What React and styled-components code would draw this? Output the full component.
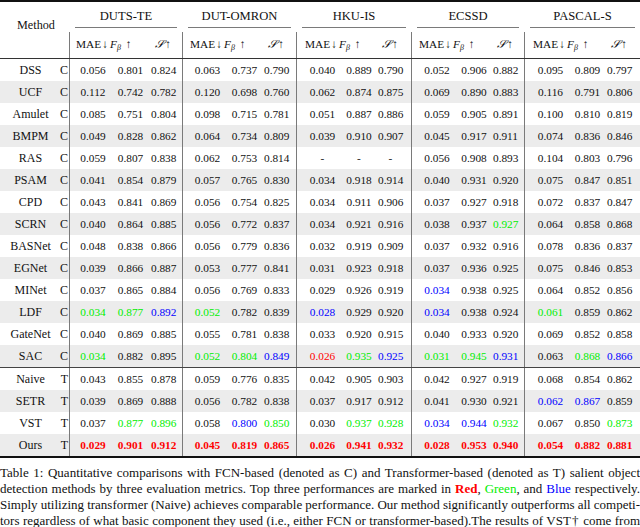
import React from 'react';
import styled, { createGlobalStyle } from 'styled-components';

const COLS = '61px 8px 113px 114px 115px 113px 116px';
const LINE = '#7a7a7a';

const Global = createGlobalStyle`
  html, body { margin: 0; padding: 0; background: #fff; }
  body { font-family: "Liberation Serif", "Times New Roman", serif; color: #111; }
`;

const Figure = styled.div`
  width: 640px;
  height: 527px;
  overflow: hidden;
`;

const Rule = styled.div`
  height: ${(p) => p.$h}px;
  background: ${(p) => p.$c};
`;

const Header = styled.div`
  display: grid;
  grid-template-columns: ${COLS};
  grid-template-rows: 26px 4px 26px;
  font-size: 12px;
`;

const MethodHead = styled.div`
  grid-row: 1 / span 3;
  grid-column: 1 / span 2;
  text-align: center;
  padding: 15px 0 0 3px;
  line-height: 16px;
  font-size: 12.2px;
`;

const GroupTitle = styled.div`
  grid-row: 1;
  margin: 0 5px 0 6px;
  border-bottom: 1px solid ${LINE};
  padding-top: 3px;
  line-height: 22px;
  text-align: center;
  font-size: 12.6px;
`;

const GroupGrid = styled.div`
  display: grid;
  grid-template-columns: ${(p) => p.$a}px ${(p) => p.$b}px 25px;
  align-items: center;
  padding-left: ${(p) => p.$p}px;
  border-left: 1px solid ${LINE};
  box-sizing: border-box;
`;

const SubHead = styled(GroupGrid)`
  grid-row: 3;
  padding-bottom: 2px;
  font-size: 11.3px;
`;

const MaeF = styled.span`
  grid-column: 1 / span 2;
  white-space: nowrap;
  display: flex;
  align-items: baseline;
`;

const Arrow = styled.span`
  display: inline-block;
  width: ${(p) => p.$w || 8}px;
  margin-left: ${(p) => p.$ml || 0}px;
  text-align: center;
  font-size: 11.5px;
`;

const MathF = styled.i`
  margin-left: 1px;
`;

const Sub = styled.span`
  font-size: 8px;
  font-style: italic;
  position: relative;
  top: 2px;
`;

const SHead = styled.span`
  text-align: center;
  white-space: nowrap;
`;

const CalS = styled.i`
  font-family: "DejaVu Serif", serif;
  font-size: 11.5px;
`;

const Row = styled.div`
  display: grid;
  grid-template-columns: ${COLS};
  height: 22px;
  align-items: stretch;
  background: ${(p) => (p.$shade ? '#ececec' : 'transparent')};
  font-size: 11.3px;
`;

const NameCell = styled.div`
  display: flex;
  align-items: center;
  justify-content: center;
  font-size: 12px;
`;

const TypeCell = styled.div`
  display: flex;
  align-items: center;
  justify-content: flex-end;
  padding-right: 1px;
  font-size: 12px;
`;

const Value = styled.span`
  text-align: center;
  color: ${(p) => p.$color};
  font-weight: ${(p) => (p.$bold ? 700 : 400)};
`;

const Caption = styled.div`
  margin-top: 7px;
  font-size: 13px;
  line-height: 16px;
  color: #111;
`;

const CapLine = styled.div`
  text-align: justify;
  text-align-last: justify;
  word-spacing: -1px;
  white-space: nowrap;
`;

const Tint = styled.span`
  color: ${(p) => p.$color};
  font-weight: ${(p) => (p.$bold ? 700 : 400)};
`;

const COLORS = { r: '#ff0000', g: '#00ee00', b: '#0000ff' };

const GROUPS = [
  { title: 'DUTS-TE', p: 6, a: 34, b: 41 },
  { title: 'DUT-OMRON', p: 7, a: 35, b: 39 },
  { title: 'HKU-IS', p: 8, a: 35, b: 38 },
  { title: 'ECSSD', p: 7, a: 36, b: 38 },
  { title: 'PASCAL-S', p: 8, a: 35, b: 39 },
];

const ROWS = [
  ['DSS', 'C', '0.056 0.801 0.824 0.063 0.737 0.790 0.040 0.889 0.790 0.052 0.906 0.882 0.095 0.809 0.797'],
  ['UCF', 'C', '0.112 0.742 0.782 0.120 0.698 0.760 0.062 0.874 0.875 0.069 0.890 0.883 0.116 0.791 0.806'],
  ['Amulet', 'C', '0.085 0.751 0.804 0.098 0.715 0.781 0.051 0.887 0.886 0.059 0.905 0.891 0.100 0.810 0.819'],
  ['BMPM', 'C', '0.049 0.828 0.862 0.064 0.734 0.809 0.039 0.910 0.907 0.045 0.917 0.911 0.074 0.836 0.846'],
  ['RAS', 'C', '0.059 0.807 0.838 0.062 0.753 0.814 - - - 0.056 0.908 0.893 0.104 0.803 0.796'],
  ['PSAM', 'C', '0.041 0.854 0.879 0.057 0.765 0.830 0.034 0.918 0.914 0.040 0.931 0.920 0.075 0.847 0.851'],
  ['CPD', 'C', '0.043 0.841 0.869 0.056 0.754 0.825 0.034 0.911 0.906 0.037 0.927 0.918 0.072 0.837 0.847'],
  ['SCRN', 'C', '0.040 0.864 0.885 0.056 0.772 0.837 0.034 0.921 0.916 0.038 0.937 0.927g 0.064 0.858 0.868'],
  ['BASNet', 'C', '0.048 0.838 0.866 0.056 0.779 0.836 0.032 0.919 0.909 0.037 0.932 0.916 0.078 0.836 0.837'],
  ['EGNet', 'C', '0.039 0.866 0.887 0.053 0.777 0.841 0.031 0.923 0.918 0.037 0.936 0.925 0.075 0.846 0.853'],
  ['MINet', 'C', '0.037 0.865 0.884 0.056 0.769 0.833 0.029 0.926 0.919 0.034b 0.938 0.925 0.064 0.852 0.856'],
  ['LDF', 'C', '0.034g 0.877g 0.892b 0.052g 0.782 0.839 0.028b 0.929 0.920 0.034b 0.938 0.924 0.061g 0.859 0.862'],
  ['GateNet', 'C', '0.040 0.869 0.885 0.055 0.781 0.838 0.033 0.920 0.915 0.040 0.933 0.920 0.069 0.852 0.858'],
  ['SAC', 'C', '0.034g 0.882 0.895 0.052g 0.804g 0.849b 0.026r 0.935g 0.925b 0.031g 0.945g 0.931b 0.063 0.868g 0.866b'],
  ['Naive', 'T', '0.043 0.855 0.878 0.059 0.776 0.835 0.042 0.905 0.903 0.042 0.927 0.919 0.068 0.854 0.862'],
  ['SETR', 'T', '0.039 0.869 0.888 0.056 0.782 0.838 0.037 0.917 0.912 0.041 0.930 0.921 0.062b 0.867b 0.859'],
  ['VST', 'T', '0.037 0.877g 0.896g 0.058 0.800b 0.850g 0.030 0.937g 0.928g 0.034b 0.944b 0.932g 0.067 0.850 0.873g'],
  ['Ours', 'T', '0.029r 0.901r 0.912r 0.045r 0.819r 0.865r 0.026r 0.941r 0.932r 0.028r 0.953r 0.940r 0.054r 0.882r 0.881r', true],
];

function parse(tok) {
  const last = tok[tok.length - 1];
  if (COLORS[last]) return { text: tok.slice(0, -1), color: COLORS[last] };
  return { text: tok, color: '#111' };
}

function DataRow({ row, index }) {
  const [name, type, data, bold] = row;
  const vals = data.split(' ').map(parse);
  return (
    <Row $shade={index % 2 === 1}>
      <NameCell>{name}</NameCell>
      <TypeCell>{type}</TypeCell>
      {GROUPS.map((g, gi) => (
        <GroupGrid key={g.title} $p={g.p} $a={g.a} $b={g.b}>
          {vals.slice(gi * 3, gi * 3 + 3).map((v, vi) => (
            <Value key={vi} $color={v.color} $bold={bold}>
              {v.text}
            </Value>
          ))}
        </GroupGrid>
      ))}
    </Row>
  );
}

export default function App() {
  return (
    <Figure>
      <Global />
      <Rule $h={2} $c="#111" />
      <Header>
        <MethodHead>Method</MethodHead>
        {GROUPS.map((g) => (
          <GroupTitle key={g.title}>{g.title}</GroupTitle>
        ))}
        {GROUPS.map((g) => (
          <SubHead key={g.title} $p={g.p} $a={g.a} $b={g.b}>
            <MaeF>
              MAE<Arrow>↓</Arrow>
              <MathF>F</MathF>
              <Sub>β</Sub>
              <Arrow $ml={4} $w={7}>↑</Arrow>
            </MaeF>
            <SHead>
              <CalS>𝒮</CalS>
              <Arrow $w={8}>↑</Arrow>
            </SHead>
          </SubHead>
        ))}
      </Header>
      <Rule $h={1} $c="#333" />
      {ROWS.slice(0, 14).map((r, i) => (
        <DataRow key={r[0]} row={r} index={i} />
      ))}
      <Rule $h={1} $c="#444" />
      {ROWS.slice(14).map((r, i) => (
        <DataRow key={r[0]} row={r} index={i + 14} />
      ))}
      <Rule $h={2} $c="#111" />
      <Caption>
        <CapLine>
          Table 1: Quantitative comparisons with FCN-based (denoted as C) and Transformer-based (denoted as T) salient object
        </CapLine>
        <CapLine>
          detection methods by three evaluation metrics. Top three performances are marked in{' '}
          <Tint $color={COLORS.r} $bold>Red</Tint>, <Tint $color={COLORS.g}>Green</Tint>, and{' '}
          <Tint $color={COLORS.b}>Blue</Tint> respectively.
        </CapLine>
        <CapLine>
          Simply utilizing transformer (Naive) achieves comparable performance. Our method significantly outperforms all competi-
        </CapLine>
        <CapLine>
          tors regardless of what basic component they used (i.e., either FCN or transformer-based).The results of VST† come from
        </CapLine>
      </Caption>
    </Figure>
  );
}
